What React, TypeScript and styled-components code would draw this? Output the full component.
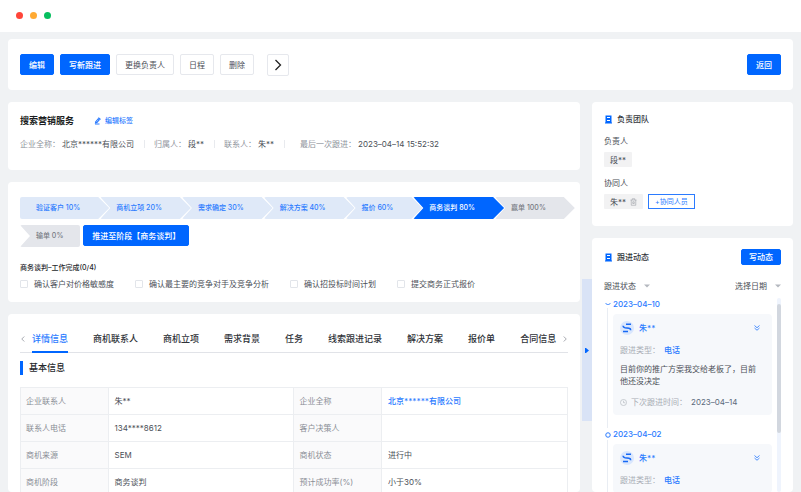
import React from "react";
import styled, { createGlobalStyle, css } from "styled-components";

const BLUE = "#0066ff";
const LINK = "#2b7bff";

const GlobalStyle = createGlobalStyle`
  * { box-sizing: border-box; }
  body {
    margin: 0;
    background: #f0f2f4;
    color: #4b4f57;
    font-family: Inter, "Noto Sans CJK SC", sans-serif;
    font-size: 8px;
    line-height: 12px;
  }
  button, input, select { font: inherit; color: inherit; margin: 0; }
  h1, h2, h3, p, ul, ol, dl, dd { margin: 0; padding: 0; font-size: inherit; font-weight: inherit; }
  ul, ol { list-style: none; }
  a { text-decoration: none; }
  svg { display: block; flex: none; }
`;

const Page = styled.div`
  display: flex;
  flex-direction: column;
  height: 100vh;
  overflow: hidden;
`;

const WindowBar = styled.header`
  display: flex;
  flex: none;
  gap: 7px;
  height: 32px;
  padding: 12px 16px;
  background: #fff;
`;

const Light = styled.span<{ $color: string }>`
  width: 7px;
  height: 7px;
  border-radius: 50%;
  background: ${(p) => p.$color};
`;

const Card = styled.section`
  background: #fff;
  border-radius: 4px;
`;

const Workspace = styled.div`
  display: flex;
  flex: 1;
  flex-direction: column;
  gap: 12px;
  min-height: 0;
  padding: 7px 8px 0;
`;

const Toolbar = styled(Card)`
  display: flex;
  flex: none;
  align-items: center;
  gap: 6px;
  height: 51px;
  padding: 0 12px;
`;

const Button = styled.button<{ $primary?: boolean }>`
  display: inline-flex;
  align-items: center;
  justify-content: center;
  height: 21px;
  padding: 0 8px;
  border: 1px solid ${(p) => (p.$primary ? BLUE : "#e6e8ed")};
  border-radius: 2px;
  background: ${(p) => (p.$primary ? BLUE : "#fff")};
  color: ${(p) => (p.$primary ? "#fff" : "#4b4f57")};
  font-weight: ${(p) => (p.$primary ? 500 : 400)};
  white-space: nowrap;
  cursor: pointer;
`;

const MoreButton = styled(Button)`
  width: 22px;
  height: 22px;
  margin-left: 7px;
  padding: 0;
  color: #222;
`;

const BackButton = styled(Button)`
  margin-left: auto;
`;

const Columns = styled.div`
  display: grid;
  flex: 1;
  grid-template-columns: minmax(0, 1fr) 12px 201px;
  min-height: 0;
`;

const Column = styled.div`
  display: flex;
  flex-direction: column;
  gap: 12px;
  min-width: 0;
  min-height: 0;
`;

const Gutter = styled.div`
  display: flex;
  justify-content: flex-end;
  padding-top: 177px;
`;

const CollapseHandle = styled.button`
  display: flex;
  align-items: center;
  width: 10px;
  height: 142px;
  padding: 0 3px;
  border: 0;
  background: #d9e3f6;
  cursor: pointer;
`;

const SummaryCard = styled(Card)`
  flex: none;
  padding: 12px 12px 20px;
`;

const SummaryTitle = styled.div`
  display: flex;
  align-items: center;
  gap: 20px;
  height: 14px;
`;

const Name = styled.h1`
  color: #1c1e22;
  font-size: 9px;
  font-weight: 700;
`;

const EditTag = styled.a`
  display: flex;
  align-items: center;
  gap: 4px;
  color: ${LINK};
  font-size: 7px;
  font-weight: 500;
`;

const Facts = styled.dl`
  display: flex;
  margin-top: 10px;
  white-space: nowrap;
`;

const Fact = styled.div`
  display: flex;
  gap: 2px;

  & + & {
    margin-left: 10px;
    padding-left: 10px;
    background: linear-gradient(#e8eaee, #e8eaee) left center / 1px 8px no-repeat;
  }

  &&:last-child { padding-left: 16px; }

  dt { color: #8f949d; }
  dd { color: #4b4f57; }
`;

const StageCard = styled(Card)`
  flex: none;
  padding: 15px 4px 12px 12px;
`;

const Stages = styled.ol`
  display: flex;
  flex-wrap: wrap;
  row-gap: 6px;
`;

type StageTone = "passed" | "current" | "open";

const toneStyles = {
  passed: css`background: #dfe9f8; color: ${LINK};`,
  current: css`background: ${BLUE}; color: #fff;`,
  open: css`background: #e4e6eb; color: #777b83;`,
};

const shapeStyles = {
  first: "polygon(0 0, calc(100% - 11px) 0, 100% 50%, calc(100% - 11px) 100%, 0 100%)",
  middle: "polygon(0 0, calc(100% - 11px) 0, 100% 50%, calc(100% - 11px) 100%, 0 100%, 10px 50%)",
  last: "polygon(0 0, 100% 0, 100% 100%, 0 100%, 10px 50%)",
};

const Stage = styled.li<{ $tone: StageTone; $shape: keyof typeof shapeStyles }>`
  height: 22px;
  padding: 0 ${(p) => (p.$shape === "last" ? 17 : 29)}px 0 16px;
  margin-right: ${(p) => (p.$shape === "last" ? 3 : -9)}px;
  border-radius: 2px;
  clip-path: ${(p) => shapeStyles[p.$shape]};
  font-size: 7px;
  font-weight: 500;
  line-height: 22px;
  white-space: nowrap;
  ${(p) => toneStyles[p.$tone]}
`;

const TaskTitle = styled.h2`
  margin-top: 15px;
  color: #26282c;
  font-size: 7px;
  font-weight: 500;
  line-height: 11px;
`;

const Tasks = styled.ul`
  display: flex;
  flex-wrap: wrap;
  gap: 6px 21px;
  margin-top: 5px;
`;

const Task = styled.label`
  display: flex;
  align-items: center;
  gap: 6px;
`;

const Tick = styled.input`
  width: 8px;
  height: 8px;
  border: 1px solid #e2e5ea;
  border-radius: 1px;
  background: #fff;
  appearance: none;

  &:checked { background: ${BLUE}; }
`;

const DetailCard = styled(Card)`
  flex: 1;
  min-height: 0;
  padding: 16px 12px 0;
  overflow: hidden;
`;

const TabBar = styled.div`
  display: flex;
  align-items: flex-start;
  height: 23px;
  box-shadow: inset 0 -1px #e1e3e8;
`;

const TabArrow = styled.button`
  display: flex;
  flex: none;
  align-items: center;
  justify-content: center;
  width: 6px;
  height: 18px;
  padding: 0;
  border: 0;
  background: none;
  color: #8a8e96;
`;

const TabList = styled.div`
  display: flex;
  flex: 1;
  gap: 25px;
  min-width: 0;
  height: 100%;
  margin: 0 5px 0 6px;
  overflow: hidden;
`;

const Tab = styled.button<{ $active?: boolean }>`
  flex: none;
  padding: 0 0 3px;
  border: 0;
  border-bottom: 2px solid ${(p) => (p.$active ? BLUE : "transparent")};
  background: none;
  color: ${(p) => (p.$active ? LINK : "#303339")};
  font-size: 9px;
  font-weight: 500;
  line-height: 16px;
  cursor: pointer;
`;

const SectionTitle = styled.h2`
  display: flex;
  margin-top: 8px;
  padding-left: 6px;
  border-left: 3px solid ${BLUE};
  color: #26282c;
  font-size: 9px;
  font-weight: 500;
  line-height: 14px;
`;

const Table = styled.table`
  width: 100%;
  margin-top: 12px;
  border-collapse: collapse;
  table-layout: fixed;

  th, td {
    height: 27px;
    padding: 0 6px;
    border: 1px solid #eceef1;
    font-weight: 400;
    text-align: left;
  }
  th { width: 16%; padding: 0 5px; background: #fafafb; color: #8a8e96; }
  td { width: 34%; }
  a { color: ${LINK}; font-weight: 500; }
`;

const TeamCard = styled(Card)`
  flex: none;
  padding: 11px 12px 17px;
`;

const PanelHeading = styled.div`
  display: flex;
  align-items: center;
  gap: 4px;
  color: #33363c;
  font-weight: 500;

  button { margin-left: auto; }
`;

const FieldName = styled.h3`
  margin-top: 10px;
`;

const Members = styled.div`
  display: flex;
  gap: 5px;
  margin: 5px 0 0;
`;

const Member = styled.span`
  display: flex;
  align-items: center;
  gap: 4px;
  height: 15px;
  padding: 0 6px;
  border-radius: 1px;
  background: #f2f2f3;
`;

const IconButton = styled.button`
  display: flex;
  padding: 0;
  border: 0;
  background: none;
  cursor: pointer;
`;

const AddMember = styled(Button)`
  height: 15px;
  border-color: ${LINK};
  border-radius: 0;
  padding: 0 6px;
  color: ${LINK};
  font-size: 7px;
`;

const FeedCard = styled(Card)`
  display: flex;
  flex: 1;
  flex-direction: column;
  min-height: 0;
  padding: 11px 12px 0;
`;

const WriteButton = styled(Button)`
  height: 16px;
  padding: 0 7px;
`;

const Filters = styled.div`
  display: flex;
  justify-content: space-between;
  margin-top: 15px;
`;

const Filter = styled.span`
  display: flex;
  align-items: center;
  gap: 6px;
  color: #b4b8bf;
`;

const FilterSelect = styled.select`
  width: 34px;
  height: 12px;
  padding: 0;
  border: 0;
  background: none;
  color: #4b4f57;
  appearance: none;
`;

const FeedScroll = styled.div`
  display: flex;
  flex: 1;
  gap: 5px;
  min-height: 0;
  margin-top: 6px;
`;

const Timeline = styled.ol`
  flex: 1;
  min-width: 0;
  overflow: hidden;
`;

const TimelineEntry = styled.li`
  display: grid;
  grid-template-columns: 7px minmax(0, 1fr);
  column-gap: 2px;
`;

const Rail = styled.div`
  display: flex;
  flex-direction: column;
  align-items: center;
  gap: 2px;
  padding-top: 4px;
  color: ${LINK};

  &::after {
    flex: 1;
    width: 1px;
    background: #e9edf3;
    content: "";
  }
`;

const EntryDate = styled.h3`
  color: ${LINK};
  font-weight: 500;
  line-height: 12px;
`;

const EntryCard = styled.article`
  margin: 4px 0 13px;
  padding: 7px;
  border-radius: 4px;
  background: #f6f8fb;
`;

const Author = styled.div`
  display: flex;
  align-items: center;
  gap: 5px;
  color: ${LINK};
  font-weight: 500;

  button { margin-left: auto; padding-right: 5px; }
`;

const Avatar = styled.span`
  display: flex;
  align-items: center;
  justify-content: center;
  width: 14px;
  height: 14px;
  border-radius: 50%;
  background: #dae7fd;
`;

const MetaLine = styled.p`
  display: flex;
  align-items: center;
  gap: 4px;
  margin-top: 9px;
  color: #a9adb5;
  white-space: nowrap;

  strong { color: ${LINK}; font-weight: 500; }
  time { color: #5c6a7c; }
`;

const Note = styled.p`
  margin-top: 7px;
  padding-right: 4px;
`;

const ScrollTrack = styled.div`
  flex: none;
  width: 4px;
  border-radius: 2px;
  background: #eff4fd;
`;

const ScrollThumb = styled.div`
  height: 129px;
  margin-top: 6px;
  border-radius: 2px;
  background: #d2d7df;
`;

const Chevron = ({ size, flip, width = 1 }: { size: number; flip?: boolean; width?: number }) => (
  <svg width={size} height={size} viewBox="0 0 12 12" fill="none" stroke="currentColor" strokeWidth={width}>
    <path d={flip ? "M8.5 1 3.5 6l5 5" : "M3.5 1l5 5-5 5"} />
  </svg>
);

const PenIcon = () => (
  <svg width="7" height="8" viewBox="0 0 14 16" fill="none" stroke="currentColor">
    <path d="M1.500 13.500 2.500 9 8 2.500l4 3L6.500 12z" fill="currentColor" stroke="none" />
    <path d="m8.500 1.500 4.500 3.500" strokeWidth="2.500" />
    <path d="m5 9.500 3.500-4" stroke="#fff" strokeWidth="1" />
    <path d="M2 14h9" strokeWidth="2" />
  </svg>
);

const BookmarkIcon = () => (
  <svg width="9" height="9" viewBox="0 0 18 18" fill="none">
    <path d="M3 1h12v14h1v2H2v-2h1z" fill={BLUE} />
    <path d="M6 5h6M6 11h6" stroke="#fff" strokeWidth="2" />
  </svg>
);

const TrashIcon = () => (
  <svg width="7" height="8" viewBox="0 0 14 16" fill="none" stroke="#8a8e96" strokeWidth="1">
    <path d="M1 4h12M4.500 3.500v-2h5v2M2.500 4v10.500h9V4M5.500 7.500v3.500h3V7.500z" />
  </svg>
);

const CaretIcon = () => (
  <svg width="6" height="4" viewBox="0 0 12 8">
    <path d="M0 1h12L6 7z" fill="currentColor" />
  </svg>
);

const PlayIcon = () => (
  <svg width="4" height="5" viewBox="0 0 8 10">
    <path d="M0 0h2l6 5-6 5H0z" fill={BLUE} />
  </svg>
);

const DoubleChevron = () => (
  <svg width="6" height="6" viewBox="0 0 12 12" fill="none" stroke="currentColor" strokeWidth="1.700">
    <path d="m1 1 5 4.500L11 1M1 6l5 4.500L11 6" />
  </svg>
);

const ClockIcon = () => (
  <svg width="7" height="7" viewBox="0 0 16 16" fill="none" stroke="currentColor" strokeWidth="1.300">
    <circle cx="8" cy="8" r="7" />
    <path d="M8 4v4.500h4" />
  </svg>
);

const LogoIcon = () => (
  <svg width="10" height="10" viewBox="0 0 20 20" fill="none" stroke="#1769f5" strokeWidth="3">
    <path d="M8 2.500h10M2 17h10" />
    <path d="M2 5.500c0 3 2 3.500 4 3.800l8 1c2 .3 3.500 1 3.500 4" />
  </svg>
);

const OpenMarker = () => (
  <svg width="6" height="4" viewBox="0 0 12 8" fill="none" stroke="currentColor" strokeWidth="1.800">
    <path d="M1 2c2 4 8 4 10 0" />
  </svg>
);

const DotMarker = () => (
  <svg width="6" height="6" viewBox="0 0 12 12" fill="#fff" stroke="currentColor" strokeWidth="2">
    <circle cx="6" cy="6" r="4.500" />
  </svg>
);

const stages: { label: string; tone: StageTone; shape: keyof typeof shapeStyles }[] = [
  { label: "验证客户 10%", tone: "passed", shape: "first" },
  { label: "商机立项 20%", tone: "passed", shape: "middle" },
  { label: "需求确定 30%", tone: "passed", shape: "middle" },
  { label: "解决方案 40%", tone: "passed", shape: "middle" },
  { label: "报价 60%", tone: "passed", shape: "middle" },
  { label: "商务谈判 80%", tone: "current", shape: "middle" },
  { label: "赢单 100%", tone: "open", shape: "middle" },
  { label: "输单 0%", tone: "open", shape: "last" },
];

const facts = [
  ["企业全称\uff1a", "北京******有限公司"],
  ["归属人\uff1a", "段**"],
  ["联系人\uff1a", "朱**"],
  ["最后一次跟进\uff1a", "2023–04–14 15:52:32"],
];

const tasks = ["确认客户对价格敏感度", "确认最主要的竞争对手及竞争分析", "确认招投标时间计划", "提交商务正式报价"];

const tabs = ["详情信息", "商机联系人", "商机立项", "需求背景", "任务", "线索跟进记录", "解决方案", "报价单", "合同信息"];

const rows = [
  ["企业联系人", "朱**", "企业全称", "北京******有限公司"],
  ["联系人电话", "134****8612", "客户决策人", ""],
  ["商机来源", "SEM", "商机状态", "进行中"],
  ["商机阶段", "商务谈判", "预计成功率(%)", "小于30%"],
];

const entries = [
  {
    date: "2023–04–10",
    open: true,
    note: "目前你的推广方案我交给老板了\uff0c目前他还没决定",
    next: "2023–04–14",
  },
  { date: "2023–04–02", open: false },
];

export default function App() {
  return (
    <Page>
      <GlobalStyle />
      <WindowBar>
        <Light $color="#ff4539" />
        <Light $color="#ffaa33" />
        <Light $color="#06bf5f" />
      </WindowBar>
      <Workspace>
        <Toolbar>
          <Button $primary>编辑</Button>
          <Button $primary>写新跟进</Button>
          <Button>更换负责人</Button>
          <Button>日程</Button>
          <Button>删除</Button>
          <MoreButton aria-label="更多"><Chevron size={12} width={1.3} /></MoreButton>
          <BackButton $primary>返回</BackButton>
        </Toolbar>
        <Columns>
          <Column>
            <SummaryCard>
              <SummaryTitle>
                <Name>搜索营销服务</Name>
                <EditTag href="#tags"><PenIcon />编辑标签</EditTag>
              </SummaryTitle>
              <Facts>
                {facts.map(([term, value]) => (
                  <Fact key={term}><dt>{term}</dt><dd>{value}</dd></Fact>
                ))}
              </Facts>
            </SummaryCard>
            <StageCard>
              <Stages>
                {stages.map((s) => (
                  <Stage key={s.label} $tone={s.tone} $shape={s.shape}>{s.label}</Stage>
                ))}
                <li><Button $primary>推进至阶段【商务谈判】</Button></li>
              </Stages>
              <TaskTitle>商务谈判–工作完成(0/4)</TaskTitle>
              <Tasks>
                {tasks.map((t) => (
                  <li key={t}><Task><Tick type="checkbox" />{t}</Task></li>
                ))}
              </Tasks>
            </StageCard>
            <DetailCard>
              <TabBar>
                <TabArrow aria-label="向左"><Chevron size={6} flip width={1.5} /></TabArrow>
                <TabList role="tablist">
                  {tabs.map((t, i) => (
                    <Tab key={t} role="tab" aria-selected={i === 0} $active={i === 0}>{t}</Tab>
                  ))}
                </TabList>
                <TabArrow aria-label="向右"><Chevron size={6} width={1.5} /></TabArrow>
              </TabBar>
              <SectionTitle>基本信息</SectionTitle>
              <Table>
                <tbody>
                  {rows.map(([a, b, c, d], i) => (
                    <tr key={a}>
                      <th scope="row">{a}</th>
                      <td>{b}</td>
                      <th scope="row">{c}</th>
                      <td>{i === 0 ? <a href="#company">{d}</a> : d}</td>
                    </tr>
                  ))}
                </tbody>
              </Table>
            </DetailCard>
          </Column>
          <Gutter>
            <CollapseHandle aria-label="收起侧栏"><PlayIcon /></CollapseHandle>
          </Gutter>
          <Column>
            <TeamCard>
              <PanelHeading><BookmarkIcon /><h2>负责团队</h2></PanelHeading>
              <FieldName>负责人</FieldName>
              <Members><Member>段**</Member></Members>
              <FieldName>协同人</FieldName>
              <Members>
                <Member>朱**<IconButton aria-label="移除"><TrashIcon /></IconButton></Member>
                <AddMember>+协同人员</AddMember>
              </Members>
            </TeamCard>
            <FeedCard>
              <PanelHeading>
                <BookmarkIcon /><h2>跟进动态</h2>
                <WriteButton $primary>写动态</WriteButton>
              </PanelHeading>
              <Filters>
                <Filter>
                  <FilterSelect aria-label="跟进状态"><option>跟进状态</option></FilterSelect>
                  <CaretIcon />
                </Filter>
                <Filter>
                  <FilterSelect aria-label="选择日期"><option>选择日期</option></FilterSelect>
                  <CaretIcon />
                </Filter>
              </Filters>
              <FeedScroll>
                <Timeline>
                  {entries.map((e) => (
                    <TimelineEntry key={e.date}>
                      <Rail>{e.open ? <OpenMarker /> : <DotMarker />}</Rail>
                      <div>
                        <EntryDate>{e.date}</EntryDate>
                        <EntryCard>
                          <Author>
                            <Avatar><LogoIcon /></Avatar>
                            朱**
                            <IconButton aria-label="展开"><DoubleChevron /></IconButton>
                          </Author>
                          <MetaLine>{"跟进类型\uff1a"}<strong>电话</strong></MetaLine>
                          {e.note && <Note>{e.note}</Note>}
                          {e.next && (
                            <MetaLine><ClockIcon />{"下次跟进时间\uff1a"}<time>{e.next}</time></MetaLine>
                          )}
                        </EntryCard>
                      </div>
                    </TimelineEntry>
                  ))}
                </Timeline>
                <ScrollTrack><ScrollThumb /></ScrollTrack>
              </FeedScroll>
            </FeedCard>
          </Column>
        </Columns>
      </Workspace>
    </Page>
  );
}
